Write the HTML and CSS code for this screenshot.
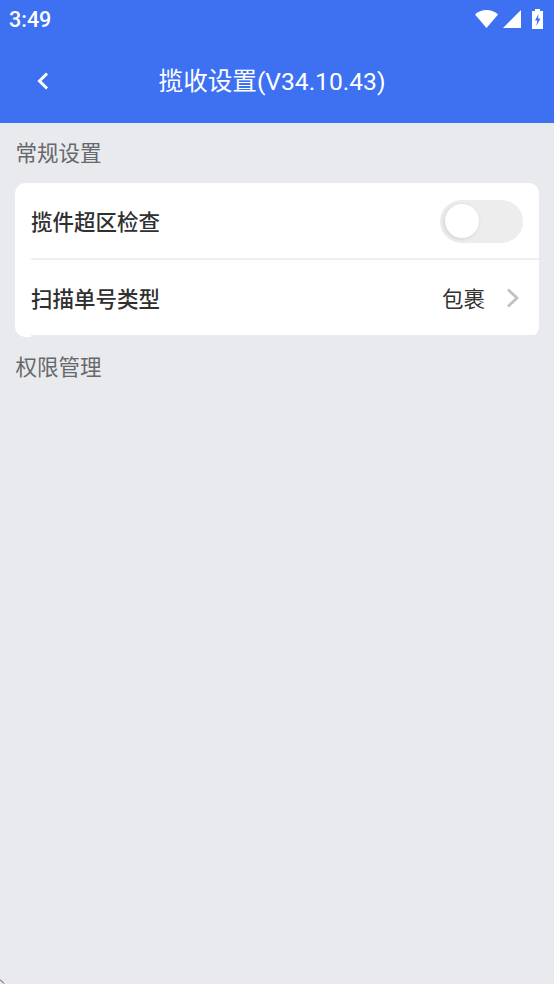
FILE: index.html
```html
<!DOCTYPE html>
<html lang="zh-CN">
<head>
    <meta charset="UTF-8">
    <title>揽收设置</title>
    <link rel="stylesheet" href="styles.css">
</head>
<body>

<div class="top">
    <div class="status-bar">
        <span class="time">3:49</span>
        <div class="status-icons">
            <svg class="icon-wifi" width="23" height="18" viewBox="0 0 23 18"><path d="M0 4.500C3 1.700 7 0 11.500 0S20 1.700 23 4.500L11.500 18z" fill="#fff"/></svg>
            <svg class="icon-signal" width="18" height="18" viewBox="0 0 18 18"><path d="M18 0v18H0z" fill="#fff"/></svg>
            <svg class="icon-battery" width="11" height="20" viewBox="0 0 11 20"><path d="M3 0h5v2h3v18H0V2h3z" fill="#fff"/><path d="M6.500 5L3 11.500h2.300L4.300 17 8.500 9.500H6z" fill="#3d71f2"/></svg>
        </div>
    </div>
    <div class="nav-bar">
        <svg class="back" width="14" height="20" viewBox="0 0 14 20"><path d="M11 2.500L3.500 10l7.500 7.500" fill="none" stroke="#fff" stroke-width="3"/></svg>
        <div class="nav-title">揽收设置(V34.10.43)</div>
    </div>
</div>

<div class="section-title">常规设置</div>
<div class="card">
    <div class="row">
        <span class="row-label">揽件超区检查</span>
        <div class="switch"><div class="switch-knob"></div></div>
    </div>
    <div class="row">
        <span class="row-label">扫描单号类型</span>
        <span class="row-value">包裹</span>
        <svg class="arrow" width="14" height="20" viewBox="0 0 14 20"><path d="M2 1.500L11 10l-9 8.500" fill="none" stroke="#c2c2c2" stroke-width="2.800"/></svg>
    </div>
</div>
<div class="section-title">权限管理</div>

<svg class="corner" width="5" height="5" viewBox="0 0 5 5"><path d="M0 0.500L4 4.500" fill="none" stroke="#444" stroke-width="1"/></svg>

</body>
</html>
```

FILE: styles.css
```css
* {
    margin: 0;
    padding: 0;
    box-sizing: border-box;
}

html, body {
    height: 100%;
}

body {
    position: relative;
    overflow: hidden;
    background: #e9eaee;
    font-family: "Roboto", "Noto Sans CJK SC", sans-serif;
}

.top {
    height: 123px;
    background: #3d71f2;
    color: #fff;
}

.status-bar {
    height: 38px;
    padding: 0 11px 0 9px;
    display: flex;
    align-items: center;
    justify-content: space-between;
}

.time {
    font-size: 21.500px;
    font-weight: 500;
}

.status-icons {
    display: flex;
    align-items: center;
    gap: 5px;
}

.icon-battery {
    margin-left: 6px;
}

.nav-bar {
    height: 85px;
    padding: 0 10px 4px 0;
    display: flex;
    align-items: center;
    justify-content: center;
    position: relative;
}

.back {
    position: absolute;
    left: 36px;
    top: 33px;
}

.nav-title {
    font-size: 24.600px;
}

.section-title {
    height: 60px;
    padding: 17px 0 0 15.500px;
    font-size: 21.500px;
    line-height: 28px;
    color: #66686c;
}

.card {
    margin: 0 15px;
    background: #fff;
    border-radius: 10px;
    padding-left: 16px;
}

.row {
    height: 77px;
    display: flex;
    align-items: center;
    padding-right: 19px;
    border-bottom: 2px solid #eeeff1;
}

.row + .row {
    border-bottom-color: #e9eaee;
}

.row-label {
    flex: 1;
    font-size: 21.500px;
    font-weight: 500;
    color: #303030;
}

.row-value {
    font-size: 21.500px;
    color: #333;
    margin-right: 21px;
}

.switch {
    width: 83px;
    height: 43px;
    margin: 2px -3px 0 0;
    border-radius: 22px;
    background: #ededed;
    padding: 4px 5px;
}

.switch-knob {
    width: 34px;
    height: 34px;
    border-radius: 50%;
    background: #fff;
    box-shadow: -1px 1px 4px rgba(0, 0, 0, 0.12);
}

.corner {
    position: absolute;
    left: 0;
    bottom: 0;
}
```
